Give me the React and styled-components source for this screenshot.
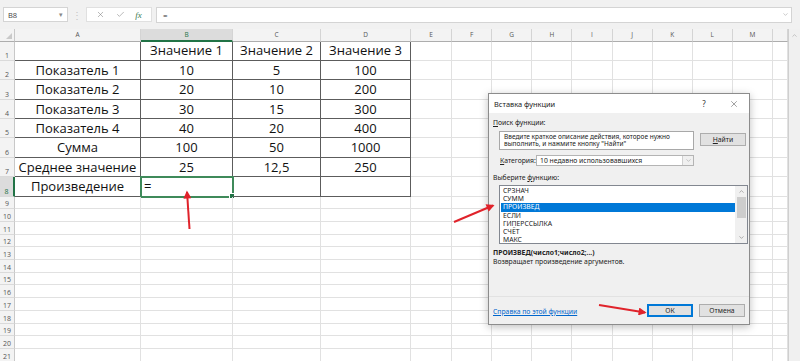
import React from "react";
import styled, { createGlobalStyle } from "styled-components";
import { X, Check, ChevronDown, ChevronUp } from "lucide-react";

const GlobalStyle = createGlobalStyle`
  html, body { margin: 0; padding: 0; background: #fff; }
  body { font-family: "Open Sans", "Noto Sans", sans-serif; }
`;

const COLS = ["A", "B", "C", "D", "E", "F", "G", "H", "I", "J", "K", "L", "M", ""];
const ROW_COUNT = 21;

const TABLE = [
    ["", "Значение 1", "Значение 2", "Значение 3"],
    ["Показатель 1", "10", "5", "100"],
    ["Показатель 2", "20", "10", "200"],
    ["Показатель 3", "30", "15", "300"],
    ["Показатель 4", "40", "20", "400"],
    ["Сумма", "100", "50", "1000"],
    ["Среднее значение", "25", "12,5", "250"],
    ["Произведение", "=", "", ""],
];

const FUNCS = ["СРЗНАЧ", "СУММ", "ПРОИЗВЕД", "ЕСЛИ", "ГИПЕРССЫЛКА", "СЧЁТ", "МАКС"];

export default function App() {
    const cells = [];
    for (let r = 1; r <= ROW_COUNT; r++) {
        cells.push(
            <RowHead key={`h${r}`} $active={r === 8}>
                {r}
            </RowHead>
        );
        COLS.forEach((_, c) => {
            const inTable = r <= 8 && c < 4;
            const text = inTable ? TABLE[r - 1][c] : "";
            const selected = r === 8 && c === 1;
            cells.push(
                <Cell
                    key={`${r}-${c}`}
                    $table={inTable}
                    $tall={r <= 8}
                    $left={selected}
                    $selected={selected}
                >
                    {text}
                </Cell>
            );
        });
    }

    return (
        <Window>
            <GlobalStyle />
            <FormulaBar>
                <NameBox>
                    <span>B8</span>
                    <NameArrow>▾</NameArrow>
                </NameBox>
                <Dots>⋮</Dots>
                <FxBox>
                    <X size={9} strokeWidth={1.4} color="#7a7a7a" />
                    <Check size={9} strokeWidth={1.4} color="#7a7a7a" />
                    <Fx>fx</Fx>
                </FxBox>
                <FormulaInput>
                    <span>=</span>
                    <ChevronDown size={7} strokeWidth={1.5} color="#8a8a8a" />
                </FormulaInput>
            </FormulaBar>

            <Main>
                <Sheet>
                    <Corner />
                    {COLS.map((c, i) => (
                        <ColHead key={i} $active={c === "B"}>
                            {c}
                        </ColHead>
                    ))}
                    {cells}
                </Sheet>
                <VScroll>
                    <ChevronUp size={7} strokeWidth={1.5} color="#8a8a8a" />
                </VScroll>
            </Main>

            <Dialog>
                <TitleBar>
                    <Title>Вставка функции</Title>
                    <TitleButton>?</TitleButton>
                    <TitleButton>
                        <X size={10} strokeWidth={1.1} color="#333" />
                    </TitleButton>
                </TitleBar>
                <Body>
                    <Label>
                        <u>П</u>оиск функции:
                    </Label>
                    <SearchRow>
                        <SearchBox>
                            Введите краткое описание действия, которое нужно
                            выполнить, и нажмите кнопку "Найти"
                        </SearchBox>
                        <Button>
                            <u>Н</u>айти
                        </Button>
                    </SearchRow>
                    <CategoryRow>
                        <Label>
                            <u>К</u>атегория:
                        </Label>
                        <Select>
                            <span>10 недавно использовавшихся</span>
                            <SelectArrow>
                                <ChevronDown size={7} strokeWidth={1.3} color="#777" />
                            </SelectArrow>
                        </Select>
                    </CategoryRow>
                    <Label $top={7}>
                        Выберите <u>ф</u>ункцию:
                    </Label>
                    <ListBox>
                        <ListItems>
                            {FUNCS.map((f) => (
                                <ListItem key={f} $selected={f === "ПРОИЗВЕД"}>
                                    {f}
                                </ListItem>
                            ))}
                        </ListItems>
                        <ListScroll>
                            <ChevronUp size={7} strokeWidth={1.6} color="#606060" />
                            <Thumb />
                            <ChevronDown size={7} strokeWidth={1.6} color="#606060" />
                        </ListScroll>
                    </ListBox>
                    <Signature>ПРОИЗВЕД(число1;число2;...)</Signature>
                    <Desc>Возвращает произведение аргументов.</Desc>
                    <Footer>
                        <HelpLink>Справка по этой функции</HelpLink>
                        <Button $primary>ОК</Button>
                        <Button>Отмена</Button>
                    </Footer>
                </Body>
            </Dialog>

            <Arrows width="800" height="361" viewBox="0 0 800 361">
                <defs>
                    <marker
                        id="head"
                        viewBox="0 0 10 10"
                        refX="8"
                        refY="5"
                        markerWidth="9"
                        markerHeight="8"
                        markerUnits="userSpaceOnUse"
                        orient="auto"
                    >
                        <path d="M0 0 L10 5 L0 10 z" fill="#e0232b" />
                    </marker>
                </defs>
                <line x1="189.5" y1="229" x2="187" y2="192" stroke="#e0232b" strokeWidth="2" markerEnd="url(#head)" />
                <line x1="454" y1="222" x2="493" y2="205.5" stroke="#e0232b" strokeWidth="2" markerEnd="url(#head)" />
                <line x1="599" y1="305" x2="645" y2="312.5" stroke="#e0232b" strokeWidth="2" markerEnd="url(#head)" />
            </Arrows>
        </Window>
    );
}

const Window = styled.div`
    position: relative;
    width: 800px;
    height: 361px;
    overflow: hidden;
    display: flex;
    flex-direction: column;
    background: #fff;
`;

const FormulaBar = styled.div`
    height: 29px;
    flex: none;
    display: flex;
    align-items: center;
    padding-left: 3px;
    background: #f1f1f1;
    box-sizing: border-box;
`;

const NameBox = styled.div`
    width: 65px;
    height: 15px;
    box-sizing: border-box;
    border: 1px solid #d4d4d4;
    background: #fff;
    display: flex;
    align-items: center;
    justify-content: space-between;
    padding: 0 4px 0 4px;
    font-size: 7.5px;
    color: #444;
`;

const NameArrow = styled.span`
    font-size: 7px;
    color: #888;
`;

const Dots = styled.span`
    width: 18px;
    text-align: center;
    font-size: 10px;
    color: #c4c4c4;
`;

const FxBox = styled.div`
    width: 66px;
    height: 15px;
    box-sizing: border-box;
    border: 1px solid #e0e0e0;
    background: #fff;
    display: flex;
    align-items: center;
    justify-content: space-around;
    padding: 0 4px;
`;

const Fx = styled.span`
    font-family: "Liberation Serif", serif;
    font-style: italic;
    font-size: 9px;
    color: #3a7a50;
`;

const FormulaInput = styled.div`
    flex: 1;
    height: 16px;
    margin: 0 8px 0 4px;
    box-sizing: border-box;
    border: 1px solid #d4d4d4;
    background: #fff;
    display: flex;
    align-items: center;
    justify-content: space-between;
    padding: 0 2px 0 6px;
    font-size: 8px;
    color: #333;
`;

const Main = styled.div`
    flex: 1;
    display: flex;
    min-height: 0;
`;

const Sheet = styled.div`
    display: grid;
    grid-template-columns: 15px 126px 92px 88px 90px 41px repeat(8, 40.125px) 15px;
    grid-template-rows: 12.5px repeat(8, 19.4px) repeat(13, 12.7px);
    align-content: start;
`;

const Corner = styled.div`
    position: relative;
    background: #f3f3f3;
    border-right: 1px solid #c8c8c8;
    border-bottom: 1px solid #adadad;
    &::after {
        content: "";
        position: absolute;
        right: 2px;
        bottom: 2px;
        border-left: 6px solid transparent;
        border-bottom: 6px solid #c9c9c9;
    }
`;

const ColHead = styled.div`
    background: ${(p) => (p.$active ? "#dcdcdc" : "#f3f3f3")};
    border-right: 1px solid #d4d4d4;
    border-bottom: ${(p) => (p.$active ? "2px solid #217346" : "1px solid #adadad")};
    font-size: 6.5px;
    color: ${(p) => (p.$active ? "#217346" : "#555")};
    display: flex;
    align-items: center;
    justify-content: center;
    box-sizing: border-box;
`;

const RowHead = styled.div`
    background: ${(p) => (p.$active ? "#dcdcdc" : "#f3f3f3")};
    border-right: ${(p) => (p.$active ? "2px solid #217346" : "1px solid #c8c8c8")};
    border-bottom: 1px solid #dadada;
    font-size: 7px;
    color: ${(p) => (p.$active ? "#217346" : "#555")};
    display: flex;
    align-items: flex-end;
    justify-content: center;
    padding-bottom: 1px;
    box-sizing: border-box;
    line-height: 1;
`;

const Cell = styled.div`
    position: relative;
    box-sizing: border-box;
    border-right: 1px solid ${(p) => (p.$table ? "#5c5c5c" : "#e1e1e1")};
    border-bottom: 1px solid ${(p) => (p.$table ? "#5c5c5c" : "#e1e1e1")};
    font-size: 13px;
    color: #111;
    white-space: nowrap;
    display: flex;
    align-items: flex-end;
    justify-content: ${(p) => (p.$left ? "flex-start" : "center")};
    padding: 0 3px 0.5px;
    line-height: 17px;
    overflow: visible;
    outline: ${(p) => (p.$selected ? "2px solid #3f8a5a" : "none")};
    outline-offset: -1px;
    ${(p) =>
        p.$selected &&
        `&::after {
            content: "";
            position: absolute;
            right: -3px;
            bottom: -3px;
            width: 4px;
            height: 4px;
            background: #217346;
            border: 1px solid #fff;
        }`}
`;

const VScroll = styled.div`
    width: 12px;
    flex: none;
    background: #f0f0f0;
    border-left: 1px solid #cfcfcf;
    display: flex;
    justify-content: center;
    padding-top: 3px;
    box-sizing: border-box;
`;

const Dialog = styled.div`
    position: absolute;
    left: 488px;
    top: 93px;
    width: 262px;
    height: 232px;
    box-sizing: border-box;
    border: 1px solid #8c8c8c;
    box-shadow: 0 2px 8px rgba(0, 0, 0, 0.25);
    background: #f0f0f0;
    display: flex;
    flex-direction: column;
    font-family: "Noto Sans", "Open Sans", sans-serif;
    font-size: 6.8px;
    color: #222;
`;

const TitleBar = styled.div`
    height: 19px;
    flex: none;
    background: #fff;
    display: flex;
    align-items: center;
    padding-left: 5px;
`;

const Title = styled.span`
    flex: 1;
    font-size: 7.4px;
    color: #222;
`;

const TitleButton = styled.span`
    width: 30px;
    display: flex;
    justify-content: center;
    font-size: 8px;
    color: #333;
`;

const Body = styled.div`
    flex: 1;
    display: flex;
    flex-direction: column;
    padding: 0 0 0 4px;
    min-height: 0;
`;

const Label = styled.div`
    margin-top: ${(p) => (p.$top ?? 5)}px;
    height: 9px;
    line-height: 9px;
    white-space: nowrap;
`;

const SearchRow = styled.div`
    display: flex;
    align-items: flex-start;
    margin-top: 4px;
    padding-left: 6px;
`;

const SearchBox = styled.div`
    width: 195px;
    height: 19px;
    box-sizing: border-box;
    border: 1px solid #a8a8a8;
    background: #fff;
    padding: 2px 4px 0;
    line-height: 6.8px;
    font-size: 6.5px;
`;

const Button = styled.div`
    width: 46px;
    height: 13px;
    box-sizing: border-box;
    margin-left: 6px;
    margin-top: ${(p) => (p.$primary ? 0 : 0)}px;
    border: 1px solid ${(p) => (p.$primary ? "#0078d7" : "#adadad")};
    box-shadow: ${(p) => (p.$primary ? "inset 0 0 0 1px #0078d7" : "none")};
    background: #e1e1e1;
    display: flex;
    align-items: center;
    justify-content: center;
    font-size: 6.8px;
    ${SearchRow} & {
        margin-top: 2px;
    }
`;

const CategoryRow = styled.div`
    display: flex;
    align-items: center;
    margin-top: 5px;
    padding-left: 7px;
    gap: 2px;
    ${Label} {
        margin-top: 0;
        width: 34px;
    }
`;

const Select = styled.div`
    width: 158px;
    height: 11px;
    box-sizing: border-box;
    border: 1px solid #b4b4b4;
    background: #fff;
    display: flex;
    align-items: center;
    justify-content: space-between;
    padding-left: 3px;
`;

const SelectArrow = styled.span`
    width: 10px;
    height: 100%;
    border-left: 1px solid #d0d0d0;
    background: #f0f0f0;
    display: flex;
    align-items: center;
    justify-content: center;
`;

const ListBox = styled.div`
    margin: 3px 0 0 6px;
    width: 249px;
    height: 59px;
    box-sizing: border-box;
    border: 1px solid #828790;
    background: #fff;
    display: flex;
`;

const ListItems = styled.div`
    flex: 1;
    padding: 1px 0 0 1px;
`;

const ListItem = styled.div`
    height: 8.2px;
    line-height: 8.2px;
    padding-left: 2px;
    font-size: 6.8px;
    background: ${(p) => (p.$selected ? "#0078d7" : "transparent")};
    color: ${(p) => (p.$selected ? "#fff" : "#222")};
`;

const ListScroll = styled.div`
    width: 12px;
    background: #f0f0f0;
    display: flex;
    flex-direction: column;
    align-items: center;
    justify-content: space-between;
    padding: 2px 0;
    box-sizing: border-box;
`;

const Thumb = styled.div`
    width: 9px;
    flex: 1;
    margin: 2px 0 16px;
    background: #cdcdcd;
`;

const Signature = styled.div`
    margin-top: 4px;
    height: 9px;
    line-height: 9px;
    font-weight: 700;
`;

const Desc = styled.div`
    height: 9px;
    line-height: 9px;
`;

const Footer = styled.div`
    margin: auto 0 0 -4px;
    height: 28px;
    box-sizing: border-box;
    border-top: 1px solid #e2e2e2;
    display: flex;
    align-items: center;
    padding: 0 4px 0 4px;
`;

const HelpLink = styled.span`
    flex: 1;
    color: #0066cc;
    text-decoration: underline;
    margin-top: 1px;
`;

const Arrows = styled.svg`
    position: absolute;
    left: 0;
    top: 0;
    pointer-events: none;
`;
